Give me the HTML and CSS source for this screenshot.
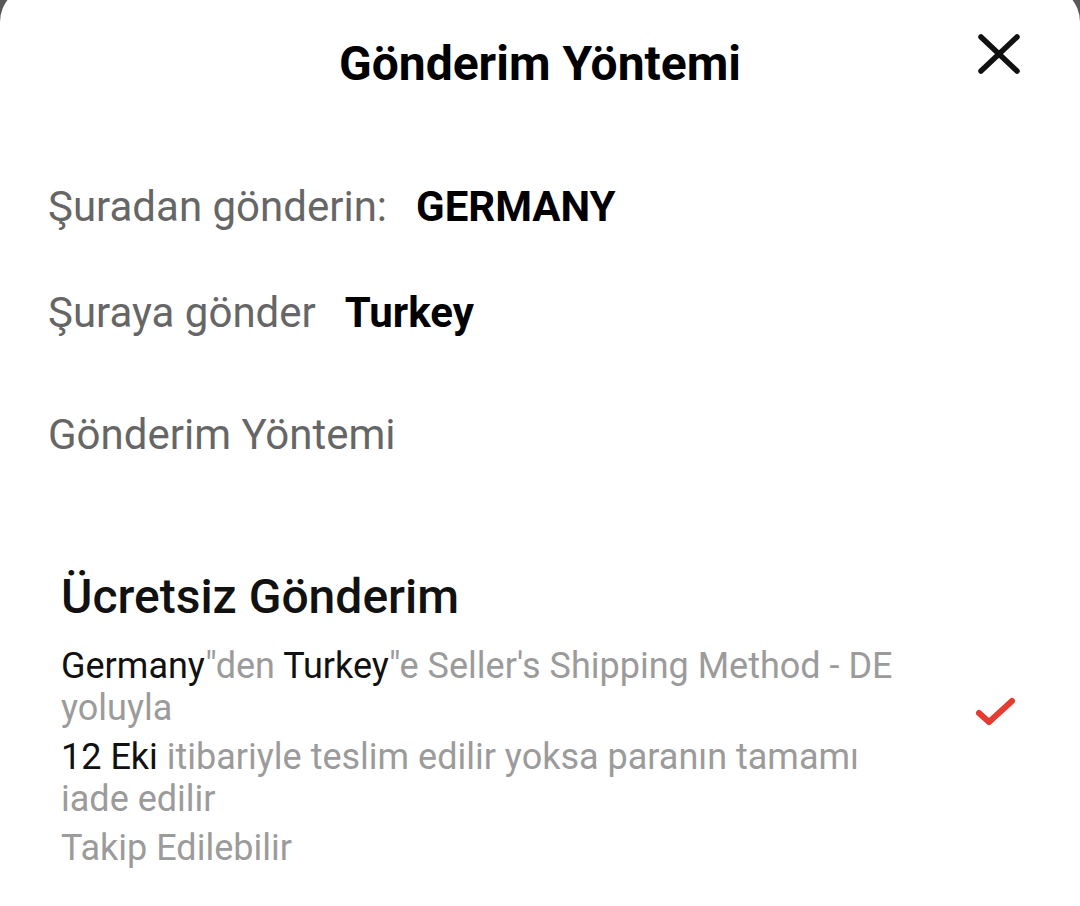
FILE: index.html
```html
<!DOCTYPE html>
<html lang="tr">
<head>
<meta charset="utf-8">
<title>Gönderim Yöntemi</title>
<link rel="stylesheet" href="styles.css">
</head>
<body>
<div class="sheet">
  <header class="header">
    <span></span>
    <h1 class="title">Gönderim Yöntemi</h1>
    <button class="close" aria-label="Kapat">
      <svg width="42" height="40" viewBox="0 0 42 40"><path d="M3 3 L39 37 M39 3 L3 37" stroke="#111" stroke-width="5.5" stroke-linecap="round" fill="none"/></svg>
    </button>
  </header>
  <div class="info">
    <div class="row row-from"><span class="label">Şuradan gönderin:</span><span class="value value-from">GERMANY</span></div>
    <div class="row row-to"><span class="label">Şuraya gönder</span><span class="value value-to">Turkey</span></div>
    <div class="row section-label"><span class="label">Gönderim Yöntemi</span></div>
  </div>
  <div class="option">
    <div class="option-body">
      <div class="option-title">Ücretsiz Gönderim</div>
      <p class="detail"><span class="dark">Germany</span>"den <span class="dark">Turkey</span>"e Seller's Shipping Method - DE yoluyla</p>
      <p class="detail"><span class="dark">12 Eki</span> itibariyle teslim edilir yoksa paranın tamamı iade edilir</p>
      <p class="detail">Takip Edilebilir</p>
    </div>
    <div class="check">
      <svg width="40" height="30" viewBox="0 0 40 30"><path d="M3 16 L13 25 L36 4" stroke="#e53b30" stroke-width="6" stroke-linecap="round" stroke-linejoin="round" fill="none"/></svg>
    </div>
  </div>
</div>
</body>
</html>
```
FILE: styles.css
```css
* { box-sizing: border-box; }
html, body { margin: 0; padding: 0; }
body {
  background: #595959;
  font-family: Roboto, "Noto Sans", "Liberation Sans", sans-serif;
  width: 1080px;
  height: 906px;
  overflow: hidden;
}
.sheet {
  background: #fff;
  margin-top: -14px;
  padding-top: 14px;
  min-height: 940px;
  border-radius: 36px 36px 0 0;
}
.header {
  height: 128px;
  display: grid;
  grid-template-columns: 1fr auto 1fr;
  align-items: center;
  padding: 0 60px;
}
.title {
  margin: 0;
  font-size: 48px;
  font-weight: 700;
  color: #000;
  line-height: 56px;
  letter-spacing: 0;
}
.close {
  justify-self: end;
  border: 0;
  background: none;
  padding: 0;
  width: 42px;
  height: 40px;
  margin-top: -20px;
  display: flex;
}
.info {
  padding-left: 48px;
}
.row {
  display: flex;
  align-items: center;
  height: 56px;
  margin-top: 50px;
}
.section-label { margin-top: 66px; }
.label {
  font-size: 42px;
  color: #666;
}
.value {
  font-size: 42px;
  font-weight: 700;
  color: #000;
}
.value-from { margin-left: 29px; }
.value-to { margin-left: 29px; }
.option {
  margin-top: 105px;
  padding-left: 61px;
  display: flex;
  align-items: center;
}
.option-body {
  width: 850px;
}
.option-title {
  font-size: 48px;
  font-weight: 500;
  color: #111;
  line-height: 60px;
  margin-bottom: 18px;
}
.detail {
  margin: 0 0 7px;
  font-size: 36px;
  line-height: 42px;
  color: #9b9b9b;
}
.dark { color: #111; }
.check {
  margin-left: 65px;
  margin-top: -20px;
  display: flex;
}
```
